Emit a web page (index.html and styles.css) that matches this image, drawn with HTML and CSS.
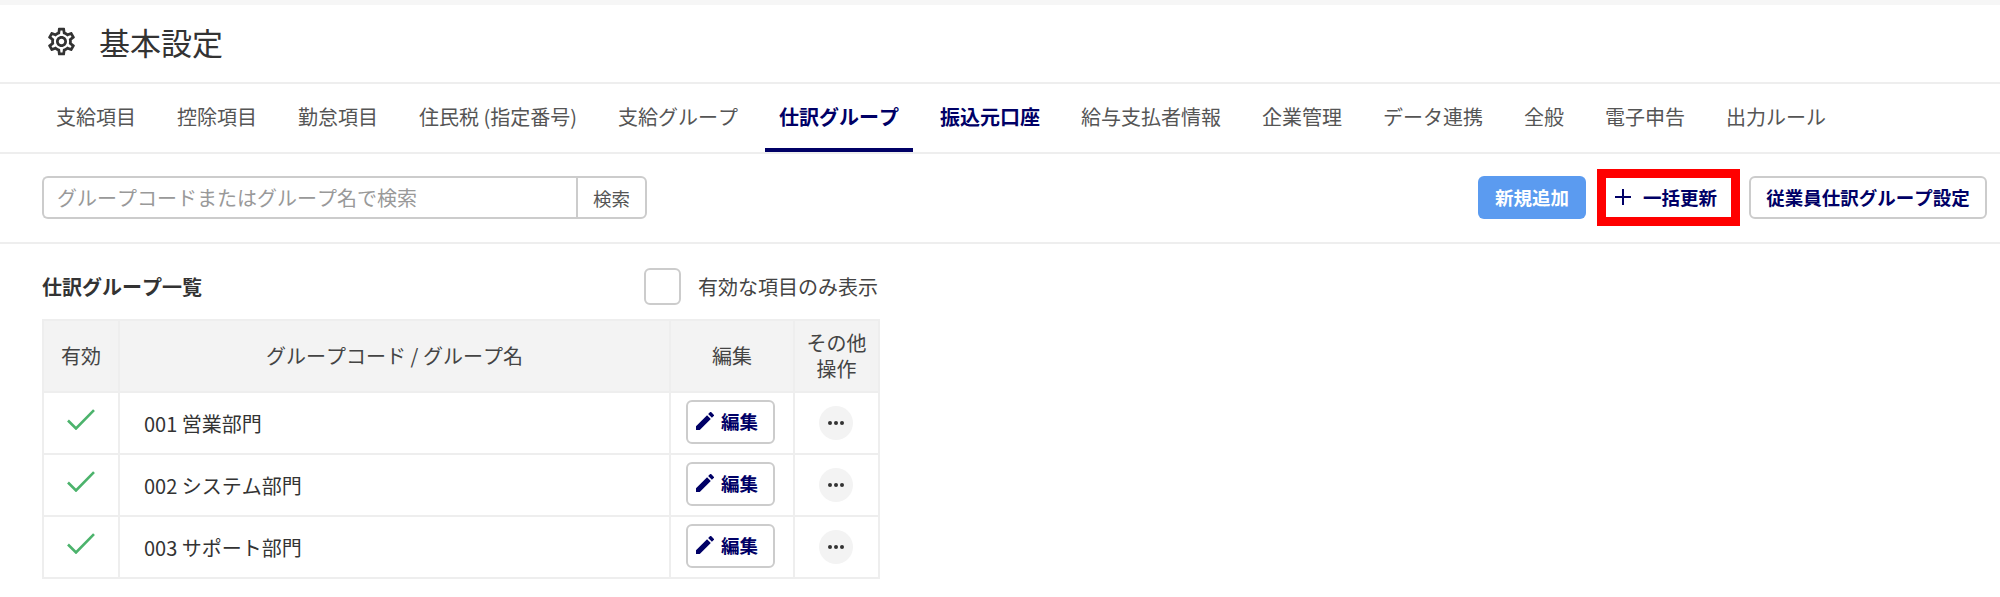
FILE: index.html
```html
<!DOCTYPE html>
<html lang="ja">
<head>
<meta charset="utf-8">
<title>基本設定</title>
<link rel="stylesheet" href="styles.css">
</head>
<body>
<header class="page-header">
  <svg class="gear" viewBox="0 0 24 24"><path d="M19.43 12.98c.04-.32.07-.64.07-.98 0-.34-.03-.66-.07-.98l2.11-1.65c.19-.15.24-.42.12-.64l-2-3.46c-.09-.16-.26-.25-.44-.25-.06 0-.12.01-.17.03l-2.49 1c-.52-.4-1.08-.73-1.69-.98l-.38-2.65C14.46 2.18 14.25 2 14 2h-4c-.25 0-.46.18-.49.42l-.38 2.65c-.61.25-1.17.59-1.69.98l-2.49-1c-.06-.02-.12-.03-.18-.03-.17 0-.34.09-.43.25l-2 3.46c-.13.22-.07.49.12.64l2.11 1.65c-.04.32-.07.65-.07.98 0 .33.03.66.07.98l-2.11 1.65c-.19.15-.24.42-.12.64l2 3.46c.09.16.26.25.44.25.06 0 .12-.01.17-.03l2.49-1c.52.4 1.08.73 1.69.98l.38 2.65c.03.24.24.42.49.42h4c.25 0 .46-.18.49-.42l.38-2.65c.61-.25 1.17-.59 1.69-.98l2.49 1c.06.02.12.03.18.03.17 0 .34-.09.43-.25l2-3.46c.12-.22.07-.49-.12-.64l-2.11-1.65zm-1.98-1.71c.04.31.05.52.05.73 0 .21-.02.43-.05.73l-.14 1.13.89.7 1.08.84-.7 1.21-1.27-.51-1.04-.42-.9.68c-.43.32-.84.56-1.25.73l-1.06.43-.16 1.13-.2 1.35h-1.4l-.19-1.35-.16-1.13-1.06-.43c-.43-.18-.83-.41-1.23-.71l-.91-.7-1.06.43-1.27.51-.7-1.21 1.08-.84.89-.7-.14-1.13c-.03-.31-.05-.54-.05-.74s.02-.43.05-.73l.14-1.13-.89-.7-1.08-.84.7-1.21 1.27.51 1.04.42.9-.68c.43-.32.84-.56 1.25-.73l1.06-.43.16-1.13.2-1.35h1.39l.19 1.35.16 1.13 1.06.43c.43.18.83.41 1.23.71l.91.7 1.06-.43 1.27-.51.7 1.21-1.07.85-.89.7.14 1.13zM12 8c-2.21 0-4 1.79-4 4s1.79 4 4 4 4-1.79 4-4-1.79-4-4-4zm0 6c-1.1 0-2-.9-2-2s.9-2 2-2 2 .9 2 2-.9 2-2 2z"/></svg>
  <h1 class="page-title">基本設定</h1>
</header>
<nav class="tabs">
  <a class="tab">支給項目</a>
  <a class="tab">控除項目</a>
  <a class="tab">勤怠項目</a>
  <a class="tab">住民税 (指定番号)</a>
  <a class="tab">支給グループ</a>
  <a class="tab tab-active">仕訳グループ</a>
  <a class="tab tab-hover">振込元口座</a>
  <a class="tab">給与支払者情報</a>
  <a class="tab">企業管理</a>
  <a class="tab">データ連携</a>
  <a class="tab">全般</a>
  <a class="tab">電子申告</a>
  <a class="tab">出力ルール</a>
</nav>
<section class="toolbar">
  <div class="search">
    <input class="search-input" type="text" placeholder="グループコードまたはグループ名で検索">
    <button class="search-btn">検索</button>
  </div>
  <div class="actions">
    <button class="btn btn-primary">新規追加</button>
    <button class="btn btn-marked">
      <svg class="plus" viewBox="0 0 18 18"><path d="M9 1v16M1 9h16"/></svg>
      <span>一括更新</span>
    </button>
    <button class="btn btn-outline">従業員仕訳グループ設定</button>
  </div>
</section>
<main class="content">
  <div class="list-head">
    <h2 class="list-title">仕訳グループ一覧</h2>
    <label class="only-active"><span class="checkbox"></span><span>有効な項目のみ表示</span></label>
  </div>
  <table class="groups">
    <thead>
      <tr>
        <th class="col-active">有効</th>
        <th class="col-name">グループコード / グループ名</th>
        <th class="col-edit">編集</th>
        <th class="col-more">その他<br>操作</th>
      </tr>
    </thead>
    <tbody>
      <tr>
        <td class="cell-check"><svg class="check" viewBox="0 0 28 21"><path d="M1 11.5l8 8L27 1.2"/></svg></td>
        <td class="cell-name">001 営業部門</td>
        <td class="cell-center"><button class="edit-btn"><svg class="pencil" viewBox="3 3 18 18"><path d="M3 17.25V21h3.75L17.81 9.94l-3.75-3.75L3 17.25zM20.71 7.04a1 1 0 0 0 0-1.41l-2.34-2.34a1 1 0 0 0-1.41 0l-1.83 1.83 3.75 3.75 1.83-1.83z"/></svg><span>編集</span></button></td>
        <td class="cell-center"><button class="more-btn"><i class="dot"></i><i class="dot"></i><i class="dot"></i></button></td>
      </tr>
      <tr>
        <td class="cell-check"><svg class="check" viewBox="0 0 28 21"><path d="M1 11.5l8 8L27 1.2"/></svg></td>
        <td class="cell-name">002 システム部門</td>
        <td class="cell-center"><button class="edit-btn"><svg class="pencil" viewBox="3 3 18 18"><path d="M3 17.25V21h3.75L17.81 9.94l-3.75-3.75L3 17.25zM20.71 7.04a1 1 0 0 0 0-1.41l-2.34-2.34a1 1 0 0 0-1.41 0l-1.83 1.83 3.75 3.75 1.83-1.83z"/></svg><span>編集</span></button></td>
        <td class="cell-center"><button class="more-btn"><i class="dot"></i><i class="dot"></i><i class="dot"></i></button></td>
      </tr>
      <tr>
        <td class="cell-check"><svg class="check" viewBox="0 0 28 21"><path d="M1 11.5l8 8L27 1.2"/></svg></td>
        <td class="cell-name">003 サポート部門</td>
        <td class="cell-center"><button class="edit-btn"><svg class="pencil" viewBox="3 3 18 18"><path d="M3 17.25V21h3.75L17.81 9.94l-3.75-3.75L3 17.25zM20.71 7.04a1 1 0 0 0 0-1.41l-2.34-2.34a1 1 0 0 0-1.41 0l-1.83 1.83 3.75 3.75 1.83-1.83z"/></svg><span>編集</span></button></td>
        <td class="cell-center"><button class="more-btn"><i class="dot"></i><i class="dot"></i><i class="dot"></i></button></td>
      </tr>
    </tbody>
  </table>
</main>
</body>
</html>
```
FILE: styles.css
```css
* { box-sizing: border-box; }
html, body { margin: 0; padding: 0; }
body {
  background: #fff;
  color: #333;
  font-family: "Noto Sans CJK JP", "Noto Sans", sans-serif;
  font-size: 20px;
  font-kerning: none;
  overflow: hidden;
}
button, input { font-family: inherit; font-kerning: none; }

.page-header {
  display: flex;
  align-items: center;
  height: 84px;
  padding: 0 0 4px 45px;
  border-top: 5px solid #f6f6f6;
  border-bottom: 2px solid #eee;
}
.gear { width: 33px; height: 33px; fill: #333; flex: none; }
.page-title { margin: 0 0 0 21px; font-size: 31px; font-weight: 400; line-height: 40px; color: #333; }

.tabs {
  display: flex;
  gap: 13px;
  height: 70px;
  padding-left: 42px;
  border-bottom: 2px solid #eee;
}
.tab {
  display: block;
  height: 68px;
  padding: 0 14px;
  line-height: 66px;
  color: #555;
  white-space: nowrap;
}
.tab-active { color: #006; font-weight: 700; border-bottom: 4px solid #006; }
.tab-hover { color: #006; font-weight: 700; }

.toolbar {
  display: flex;
  align-items: center;
  justify-content: space-between;
  height: 90px;
  padding: 0 13px 1px 42px;
  border-bottom: 2px solid #eee;
}
.search { display: flex; width: 605px; height: 43px; }
.search-input {
  flex: 1;
  min-width: 0;
  padding: 0 13px;
  border: 2px solid #ccc;
  border-right: 0;
  border-radius: 6px 0 0 6px;
  font-size: 20px;
  color: #333;
  outline: 0;
}
.search-input::placeholder { color: #999; opacity: 1; }
.search-btn {
  width: 71px;
  padding: 0;
  border: 2px solid #ccc;
  border-radius: 0 6px 6px 0;
  background: #fff;
  color: #555;
  font-size: 18.5px;
}
.actions { display: flex; align-items: center; gap: 11px; }
.btn {
  display: flex;
  align-items: center;
  justify-content: center;
  height: 43px;
  padding: 0 0 2px;
  border-radius: 6px;
  font-size: 18.5px;
  font-weight: 700;
  white-space: nowrap;
}
.btn-primary { width: 108px; border: 0; background: #5b9bf0; color: #fff; }
.btn-marked {
  width: 143px;
  height: 57px;
  gap: 11px;
  padding: 0 0 2px 8px;
  justify-content: flex-start;
  border: 9px solid #f00;
  border-radius: 0;
  background: #fff;
  color: #006;
}
.plus { width: 18px; height: 18px; fill: none; stroke: #006; stroke-width: 2; }
.btn-outline { width: 238px; margin-left: -2px; border: 2px solid #ccc; background: #fff; color: #006; }

.content { padding: 0 42px; }
.list-head {
  display: flex;
  align-items: center;
  width: 836px;
  height: 75px;
  padding-top: 9px;
  justify-content: space-between;
}
.list-title { margin: 0; font-size: 20px; font-weight: 700; color: #333; }
.only-active { display: flex; align-items: center; gap: 17px; color: #444; }
.checkbox { width: 37px; height: 37px; border: 2px solid #ccc; border-radius: 6px; background: #fff; }

.groups { width: 836px; border-collapse: collapse; table-layout: fixed; }
.groups th, .groups td { border: 2px solid #eee; padding: 0; }
.groups th {
  height: 72px;
  background: #f3f3f3;
  font-weight: 400;
  line-height: 26px;
  color: #444;
  text-align: center;
}
.groups td { height: 62px; }
.col-active { width: 76px; }
.col-name { width: 551px; }
.col-edit { width: 124px; }
.col-more { width: 85px; }
.cell-check { text-align: center; }
.check {
  display: block;
  width: 28px;
  height: 21px;
  margin: -8px auto 0;
  fill: none;
  stroke: #4cb36c;
  stroke-width: 2.6;
}
.cell-name { padding-left: 24px !important; color: #333; }
.cell-center { text-align: center; }
.edit-btn {
  display: inline-flex;
  align-items: center;
  justify-content: flex-start;
  gap: 7px;
  width: 89px;
  height: 44px;
  padding: 0 0 2px 8px;
  vertical-align: middle;
  margin: -2px 3px 0 0;
  border: 2px solid #ccc;
  border-radius: 6px;
  background: #fff;
  color: #006;
  font-size: 18.5px;
  font-weight: 700;
}
.pencil { width: 18px; height: 18px; fill: #006; }
.more-btn {
  display: inline-flex;
  align-items: center;
  justify-content: center;
  gap: 2px;
  width: 34px;
  height: 34px;
  padding: 0;
  vertical-align: middle;
  margin: -3px 1px 0 0;
  border: 0;
  border-radius: 50%;
  background: #f3f3f3;
}
.dot { width: 4px; height: 4px; border-radius: 50%; background: #333; }
```
